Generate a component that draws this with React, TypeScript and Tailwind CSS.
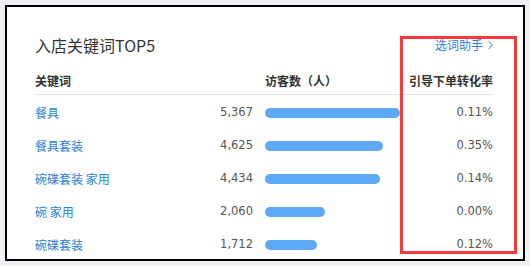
const rows = [
  { kw: '餐具', visitors: '5,367', bar: 135, rate: '0.11%' },
  { kw: '餐具套装', visitors: '4,625', bar: 118, rate: '0.35%' },
  { kw: '碗碟套装 家用', visitors: '4,434', bar: 115, rate: '0.14%' },
  { kw: '碗 家用', visitors: '2,060', bar: 60, rate: '0.00%' },
  { kw: '碗碟套装', visitors: '1,712', bar: 52, rate: '0.12%' },
]

const numFont = { fontFamily: '"DejaVu Sans", "Noto Sans", sans-serif' }

export default function App() {
  return (
    <div
      className="relative w-[530px] h-[266px] bg-[#eef0f3] pt-[5px] pl-[5px] overflow-hidden"
      style={{ fontFamily: '"Noto Sans CJK SC", "Noto Sans", sans-serif' }}
    >
      {/* Card */}
      <div className="w-[520px] h-[256px] border-2 border-black bg-white pl-[28px] pr-[30px] pt-[26px]">
        {/* Title row */}
        <div className="flex items-center justify-between h-[24px]">
          <h2 className="text-[16px] leading-[24px] text-[#333]">入店关键词TOP5</h2>
          <a className="flex items-center gap-[5px] text-[12px] text-[#2b7fd4]">
            选词助手
            <svg width="5" height="10" viewBox="0 0 5 10" fill="none" stroke="currentColor" strokeWidth="1">
              <path d="M0.6 0.8 L4.3 5 L0.6 9.2" />
            </svg>
          </a>
        </div>

        {/* Table header */}
        <div className="flex items-center h-[28px] mt-[10px] border-b border-[#e3e3e3] text-[12px] font-bold text-[#333]">
          <div className="w-[150px] shrink-0">关键词</div>
          <div className="w-[68px] shrink-0" />
          <div className="flex-1 ml-[12px]">访客数（人）</div>
          <div className="w-[93px] shrink-0 text-right">引导下单转化率</div>
        </div>

        {/* Rows */}
        <div className="pt-[1px]">
          {rows.map((r) => (
            <div key={r.kw} className="flex items-center h-[33px] text-[12px]">
              <div className="w-[150px] shrink-0 text-[#2b7fd4]">{r.kw}</div>
              <div className="w-[68px] shrink-0 text-right text-[11.5px] text-[#555]" style={numFont}>
                {r.visitors}
              </div>
              <div className="flex-1 ml-[12px]">
                <div className="h-[10px] rounded-full bg-[#5ea9f6]" style={{ width: r.bar }} />
              </div>
              <div className="w-[93px] shrink-0 text-right text-[11.5px] text-[#555]" style={numFont}>
                {r.rate}
              </div>
            </div>
          ))}
        </div>
      </div>

      {/* Red annotation box */}
      <div className="absolute left-[400px] top-[36px] w-[117px] h-[218px] border-[3px] border-[#f43a3a]" />
    </div>
  )
}
